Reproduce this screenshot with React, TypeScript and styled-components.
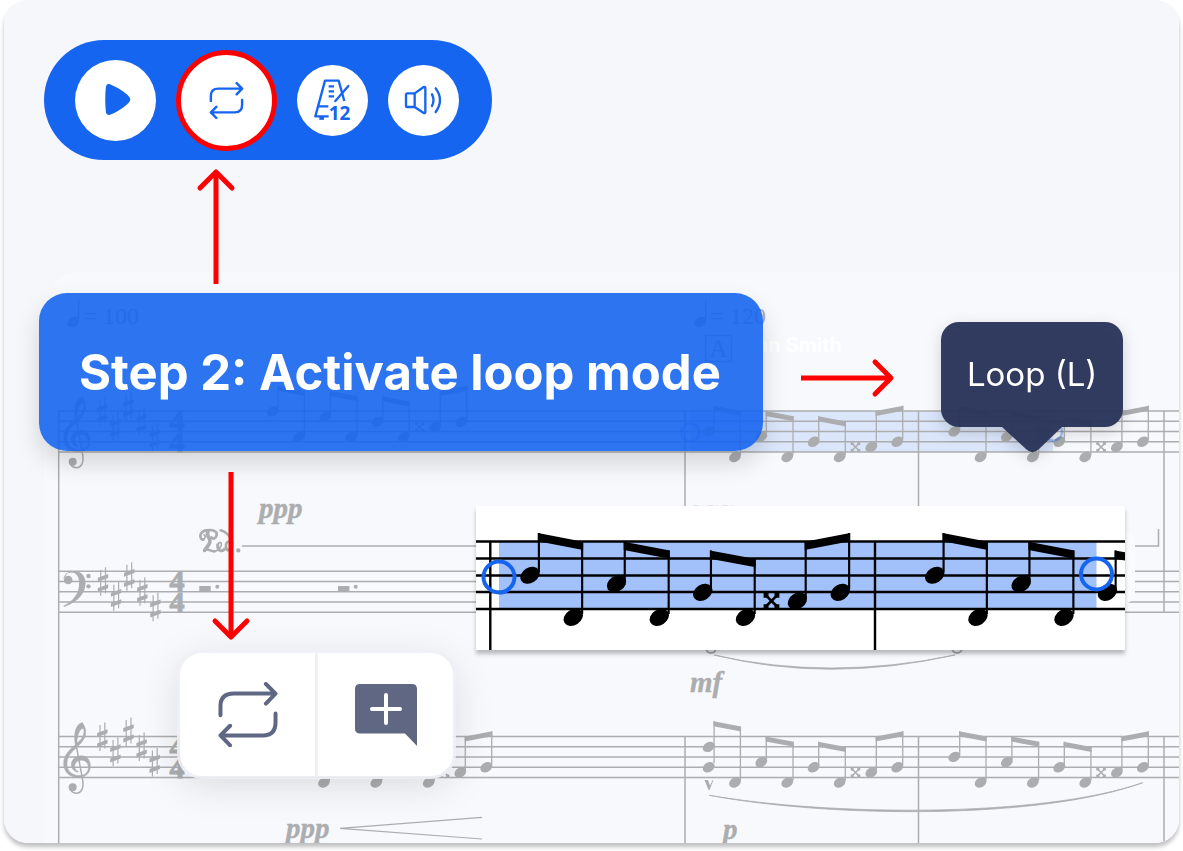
import React from "react";
import styled, { createGlobalStyle } from "styled-components";

const BLUE = "#1665f0";
const RED = "#ff0000";
const INK = "#acadaf";
const SLATE = "#606783";

const GlobalStyle = createGlobalStyle`
  *, *::before, *::after { box-sizing: border-box; }
  body { margin: 0; background: #fff; font-family: Inter, "Liberation Sans", sans-serif; }
`;

const Page = styled.main`
  padding: 0 4px 8px;
`;

const Card = styled.section`
  position: relative;
  isolation: isolate;
  overflow: hidden;
  padding: 40px 0 67px 35px;
  border-radius: 24px;
  background: #f5f7fb;
`;

const CardFrame = styled.div`
  border-radius: 24px;
  box-shadow: 0 4px 4px rgba(0, 0, 0, 0.25);
`;

const Paper = styled.div`
  position: absolute;
  z-index: -1;
  inset: 272px 0 0 40px;
  overflow: hidden;
  border-radius: 36px 0 0 0;
  background: #f8f9fd;
`;

const ScoreSvg = styled.svg`
  display: block;
  width: 100%;
  height: 100%;
`;

const Toolbar = styled.div`
  display: inline-flex;
  align-items: center;
  gap: 20px;
  height: 120px;
  margin-left: 5px;
  padding: 0 33px 0 31px;
  border-radius: 60px;
  background: ${BLUE};
`;

const RoundButton = styled.button<{ $size: number; $ring?: boolean }>`
  display: grid;
  place-items: center;
  width: ${(p) => p.$size}px;
  height: ${(p) => p.$size}px;
  padding: 0;
  border: ${(p) => (p.$ring ? `5px solid ${RED}` : "0")};
  border-radius: 50%;
  background: #fff;
  color: ${BLUE};
  cursor: pointer;
`;

const UpSlot = styled.div`
  height: 133px;
  padding: 8px 0 0 159px;
`;

const DownSlot = styled.div`
  height: 202px;
  padding: 21px 0 0 33px;
`;

const ArrowSvg = styled.svg`
  display: block;
  flex: none;
`;

const CalloutRow = styled.div`
  display: flex;
  align-items: flex-start;
`;

const Banner = styled.h1`
  flex: none;
  margin: 0;
  padding: 50px 42px 48px 40px;
  border-radius: 28px;
  background: rgba(22, 101, 240, 0.9);
  box-shadow: 0 12px 24px rgba(0, 0, 0, 0.15);
  color: #fff;
  font-size: 49px;
  font-weight: 700;
  line-height: 60px;
  white-space: nowrap;
`;

const RightSlot = styled.div`
  padding: 65px 46px 0 38px;
`;

const Tooltip = styled.div`
  position: relative;
  flex: none;
  margin-top: 29px;
  padding: 32px 26px 33px;
  border-radius: 18px;
  background: rgba(42, 52, 89, 0.96);
  color: #fff;
  font-size: 33px;
  line-height: 40px;
  white-space: nowrap;
  filter: drop-shadow(0 5px 8px rgba(0, 0, 0, 0.16));
`;

const TooltipTail = styled.svg`
  position: absolute;
  top: 100%;
  left: 50%;
  margin-left: -30px;
`;

const LowerRow = styled.div`
  display: flex;
  align-items: flex-start;
  padding: 0 54px 0 141px;
`;

const LeftColumn = styled.div`
  flex: none;
  margin-right: 23px;
`;

const Popover = styled.div`
  display: flex;
  width: 273px;
  height: 123px;
  border-radius: 22px;
  background: #fff;
  box-shadow: 0 0 0 3px rgba(238, 241, 247, 0.9), 0 8px 40px rgba(0, 0, 0, 0.13);
`;

const PopoverButton = styled.button`
  display: grid;
  flex: 1;
  place-items: center;
  padding: 0;
  border: 0;
  background: transparent;
  color: ${SLATE};
  cursor: pointer;

  & + & {
    border-left: 3px solid #eef0f6;
  }
`;

const Excerpt = styled.figure`
  flex: 0 1 649px;
  margin: 55px 0 0;
  background: #fff;
  box-shadow: 0 4px 4px rgba(0, 0, 0, 0.25);
`;

const ExcerptSvg = styled.svg`
  display: block;
  width: 100%;
  height: auto;
`;

const LoopIcon = ({ width, height }: { width: number; height: number }) => (
  <svg
    width={width}
    height={height}
    viewBox="650 545 186 196"
    fill="none"
    stroke="currentColor"
    strokeWidth={width < 40 ? 13 : 12}
    strokeLinecap="round"
    strokeLinejoin="round"
    aria-hidden="true"
  >
    <path d="M660 645V618Q660 580 700 580H824M797 551L826 580L797 610" />
    <path d="M826 640V666Q826 706 788 706H662M689 677L660 706L689 736" />
  </svg>
);

type Direction = "up" | "right" | "down";
const arrows: Record<Direction, { w: number; h: number; shaft: string; head: string }> = {
  up: { w: 36, h: 116, shaft: "M18 116V6", head: "M2 20L18 4L34 20" },
  down: { w: 36, h: 170, shaft: "M18 0V163", head: "M2 149L18 165L34 149" },
  right: { w: 94, h: 40, shaft: "M0 20H88", head: "M74 4L90 20L74 36" },
};

const Arrow = ({ direction }: { direction: Direction }) => {
  const { w, h, shaft, head } = arrows[direction];
  return (
    <ArrowSvg width={w} height={h} viewBox={`0 0 ${w} ${h}`} overflow="visible" fill="none" stroke={RED} strokeWidth="5" aria-hidden="true">
      <path d={shaft} />
      <path d={head} strokeLinecap="round" strokeLinejoin="round" />
    </ArrowSvg>
  );
};

/* Notes are placed from the first note head of a bar and the top staff line. */
const heads = [
  [0, 20.4],
  [26.3, 46],
  [52.6, 25.6],
  [78.6, 46],
  [105, 30.8],
  [131, 46],
  [162.6, 36],
  [188.6, 30.8],
];
const beams = [
  [5.4, -5.3, 31.7, 0],
  [57.6, 0, 84.3, 5.3],
  [110, 5.3, 136.6, 10.5],
  [167.6, 0, 194, -5.3],
];

const Head = ({ x, y }: { x: number; y: number }) => (
  <ellipse cx={x} cy={y} rx="6.3" ry="4.7" transform={`rotate(-32 ${x} ${y})`} />
);

interface BarProps {
  x: number;
  y: number;
  scale?: number;
  from?: number;
  to?: number;
  chord?: boolean;
}

const Bar = ({ x, y, scale = 1, from = 0, to = 8, chord = false }: BarProps) => (
  <g transform={`translate(${x} ${y}) scale(${scale})`}>
    {heads.slice(from, to).map(([hx, hy], n) => (
      <Head key={n} x={hx} y={chord && n === 0 ? 30.8 : hy} />
    ))}
    {chord && <Head x={0} y={10.4} />}
    {beams.slice(from / 2, Math.ceil(to / 2)).map(([x1, y1, x2, y2], n) => {
      const lift = chord && n === 0 ? -10 : 0;
      const i = (n + from / 2) * 2;
      return (
        <g key={n}>
          <path d={`M${x1 - 0.6} ${y1 + lift}L${x2 + 0.6} ${y2 + lift}V${y2 + lift + 5}L${x1 - 0.6} ${y1 + lift + 5}Z`} />
          <path
            d={`M${x1} ${y1 + lift}V${heads[i][1] - 2 + (chord && n === 0 ? 8 : 0)}M${x2} ${y2 + lift}V${heads[i + 1][1] - 2}`}
            stroke="currentColor"
            strokeWidth="1.3"
          />
        </g>
      );
    })}
    {to > 6 && (
      <g transform="translate(146.8 36)">
        <path d="M-4 -4L4 4M-4 4L4 -4" stroke="currentColor" strokeWidth="1.6" />
        <path d="M-4.8 -4.8H-1.8V-2.6L-2.4 -2H-4.8ZM4.8 -4.8H1.8V-2.6L2.4 -2H4.8ZM-4.8 4.8H-1.8V2.6L-2.4 2H-4.8ZM4.8 4.8H1.8V2.6L2.4 2H4.8Z" />
      </g>
    )}
  </g>
);

const Staff = ({ y, from = 58, to = 1600 }: { y: number; from?: number; to?: number }) => (
  <path
    d={[0, 10.2, 20.5, 30.7, 41].map((dy) => `M${from} ${y + dy}H${to}`).join("")}
    stroke="currentColor"
    strokeWidth="1.5"
  />
);

const Sharp = ({ x, y }: { x: number; y: number }) => (
  <g transform={`translate(${x} ${y})`}>
    <path d="M-2.3 -11.5V14.5M2.5 -14V12" stroke="currentColor" strokeWidth="1.2" />
    <path d="M-5.2 -3.6L5.2 -7.4V-3.4L-5.2 0.4ZM-5.2 6.8L5.2 3V7L-5.2 10.8Z" />
  </g>
);

const KeySignature = ({ x, y }: { x: number; y: number }) => (
  <>
    {[0, 15, -5, 10, 25.5].map((dy, n) => (
      <Sharp key={n} x={x + n * 13.1} y={y + dy} />
    ))}
  </>
);

const TimeSignature = ({ y }: { y: number }) => (
  <g
    fontFamily='"Liberation Serif", serif'
    fontSize="30"
    fontWeight="700"
    textAnchor="middle"
    stroke="currentColor"
    strokeWidth="1"
  >
    <text x="177" y={y + 20}>4</text>
    <text x="177" y={y + 41}>4</text>
  </g>
);

/* Clefs are drawn at three times their final size. */
const TrebleClef = ({ y }: { y: number }) => (
  <g transform={`translate(56 ${y - 16.3}) scale(0.3333)`} fill="none" stroke="currentColor" strokeLinecap="round">
    <path
      fill="currentColor"
      strokeWidth="1.5"
      d="M79 8C89 20 92 38 86 52C80 66 68 76 58 86C44 98 34 110 33 130C32 152 48 166 70 166C88 166 97 156 97 142C97 128 88 120 76 120C64 120 56 128 56 138C56 146 60 151 67 154L65 156C52 153 45 142 46 132C48 116 60 107 76 107C94 107 104 122 103 140C102 160 88 172 68 172C42 172 24 156 23 132C22 108 38 90 58 74C56 62 54 48 58 32C62 18 70 8 79 8ZM80 24C72 26 63 44 63 68C76 60 84 46 84 34C84 28 83 24 80 24Z"
    />
    <path strokeWidth="4.5" d="M59 66L80 180C84 204 76 219 61 219C54 219 48 216 44 210" />
    <circle cx="50" cy="201" r="12" fill="currentColor" stroke="none" />
  </g>
);

const BassClef = ({ x, y }: { x: number; y: number }) => (
  <g transform={`translate(${x} ${y}) scale(0.3333)`}>
    <path d="M0 24C2 -8 66 -12 66 36C66 74 34 96 1 108L0 105C28 90 47 70 47 36C47 8 30 0 15 6C10 8 7 12 6 16Z" />
    <circle cx="14" cy="27" r="13" />
    <circle cx="75" cy="15" r="6.5" />
    <circle cx="75" cy="46" r="6.5" />
  </g>
);

const PedalMark = () => (
  <g transform="translate(190 495) scale(0.3333)" fill="none" stroke="currentColor" strokeLinecap="round">
    <path strokeWidth="8" d="M40 134C28 134 26 110 48 106C70 102 82 110 80 120C78 130 70 134 64 127" />
    <path strokeWidth="5" d="M36 133C47 133 48 122 42 119" />
    <path strokeWidth="11" d="M54 110C46 122 62 128 60 140C58 152 50 156 44 166" />
    <path strokeWidth="8" d="M43 167C52 156 64 172 74 169" />
    <path strokeWidth="5" d="M74 169C84 168 96 156 94 146C92 138 82 144 83 154" />
    <path strokeWidth="9" d="M83 150C82 168 96 172 104 162" />
    <path strokeWidth="8" d="M122 141C112 136 106 146 108 156C110 170 122 168 126 156C130 138 118 114 92 106" />
    <circle cx="145" cy="166" r="3" strokeWidth="7" />
  </g>
);

const Tempo = ({ x, bpm }: { x: number; bpm: number }) => (
  <g transform={`translate(${x} 322)`}>
    <Head x={0} y={0} />
    <path d="M5.2 -2V-22" stroke="currentColor" strokeWidth="1.2" />
    <text x="10" y="2" fontFamily='"Liberation Serif", serif' fontSize="24">
      = {bpm}
    </text>
  </g>
);

const Dynamic = ({ x, y, children }: { x: number; y: number; children: string }) => (
  <text
    x={x}
    y={y}
    fontFamily='"Liberation Serif", serif'
    fontSize="29"
    fontWeight="700"
    fontStyle="italic"
    stroke="currentColor"
    strokeWidth="0.4"
  >
    {children}
  </text>
);

const Score = () => (
  <ScoreSvg viewBox="44 272 1135 571" preserveAspectRatio="xMinYMin slice" color={INK} fill="currentColor">
    <rect x="690" y="411" width="363" height="41" fill="#dbe6fb" />
    <Staff y={411} />
    <Staff y={571.3} />
    <Staff y={736.5} />
    <path
      d="M58.7 411V843M685 411V612M918.5 411V612M1164 411V612M685 736.5V843M918.5 736.5V843M1164 736.5V843"
      stroke="currentColor"
      strokeWidth="1.5"
    />

    <Tempo x={73.4} bpm={100} />
    <Tempo x={700.4} bpm={120} />
    <rect x="705.5" y="335.5" width="26" height="26" fill="none" stroke="currentColor" strokeWidth="1.5" />
    <text x="718.5" y="357" textAnchor="middle" fontFamily='"Liberation Serif", serif' fontSize="26">A</text>
    <text x="842" y="352" textAnchor="end" fontFamily="Inter, sans-serif" fontSize="20" fontWeight="700" fill="#fff">
      John Smith
    </text>

    <TrebleClef y={411} />
    <KeySignature x={102.3} y={411.3} />
    <TimeSignature y={411} />
    <Bar x={272.7} y={391} />
    <Bar x={708.7} y={411} />
    <Bar x={954.3} y={411} />
    <circle cx="690.5" cy="432.5" r="9" fill="none" stroke={BLUE} strokeOpacity="0.35" strokeWidth="2.5" />
    <circle cx="1053" cy="431.7" r="9" fill="none" stroke={BLUE} strokeOpacity="0.35" strokeWidth="2.5" />
    <Dynamic x={259} y={518}>ppp</Dynamic>
    <Dynamic x={692} y={520}>ppp</Dynamic>

    <PedalMark />
    <path d="M242 546H1158.5V529" fill="none" stroke="currentColor" strokeWidth="1.5" />
    <BassClef x={63.5} y={571} />
    <KeySignature x={103} y={581.3} />
    <TimeSignature y={571.3} />
    <path d="M199.3 586H210.7V591.7H199.3ZM338 586H349.4V591.7H338Z" />
    <circle cx="217.3" cy="586.7" r="2" />
    <circle cx="355.7" cy="586.7" r="2" />
    <rect x="1090" y="531" width="45" height="73" rx="12" fill="#fafbfe" />

    <circle cx="711" cy="648" r="5" fill="none" stroke="currentColor" strokeWidth="2" />
    <circle cx="957" cy="648" r="5" fill="none" stroke="currentColor" strokeWidth="2" />
    <path d="M714 655Q829 681 955 655Q829 683.5 714 655Z" stroke="currentColor" strokeWidth="0.8" />
    <Dynamic x={690} y={692}>mf</Dynamic>

    <TrebleClef y={736.5} />
    <KeySignature x={102.3} y={736.6} />
    <TimeSignature y={736.5} />
    <Bar x={297.7} y={736.5} />
    <Bar x={708.7} y={736.5} chord />
    <Bar x={954.3} y={736.5} />
    <path d="M704.5 780H708L710 785.5L712.7 780H713.5L709.5 790H708.5Z" />
    <path
      d="M709.3 795.3C830 816 1040 818 1142.7 782.7C1040 820 830 818 709.3 795.3Z"
      stroke="currentColor"
      strokeWidth="0.8"
    />
    <path d="M482 817.3L340 828.3L482 839" fill="none" stroke="currentColor" strokeWidth="1.2" />
    <Dynamic x={286} y={838}>ppp</Dynamic>
    <Dynamic x={723} y={839}>p</Dynamic>
  </ScoreSvg>
);

const LoopedExcerpt = () => (
  <Excerpt aria-label="Looped passage">
    <ExcerptSvg viewBox="476 506 649 144" color="#000" fill="currentColor">
      <rect x="499" y="541.5" width="597.5" height="67" fill="#a2c0f9" />
      <path
        d="M476 541.5H1125M476 558.5H1125M476 575.5H1125M476 592H1125M476 609H1125M490.3 541V650M875 541V650"
        stroke="currentColor"
        strokeWidth="2.4"
      />
      <Bar x={530} y={541.7} scale={1.645} />
      <Bar x={934.7} y={541.7} scale={1.645} to={6} />
      <circle cx="499" cy="577" r="15.5" fill="none" stroke={BLUE} strokeWidth="4" />
      <circle cx="1096.5" cy="574" r="15.5" fill="none" stroke={BLUE} strokeWidth="4" />
    </ExcerptSvg>
  </Excerpt>
);

export default function App() {
  return (
    <Page>
      <GlobalStyle />
      <CardFrame>
        <Card>
          <Paper>
            <Score />
          </Paper>

          <Toolbar role="toolbar" aria-label="Playback">
            <RoundButton $size={81} aria-label="Play">
              <svg width="81" height="81" viewBox="0 0 81 81" aria-hidden="true">
                <path
                  fill="currentColor"
                  d="M35 24.2C42 27 49 31.5 53.5 36Q57 39.5 53.5 43C49 47.5 42 52 35 54.8C32.5 55.5 31.2 54 30.9 52C30 43.5 30 35.5 30.9 27C31.2 25 32.5 23.5 35 24.2Z"
                />
              </svg>
            </RoundButton>
            <RoundButton $size={101} $ring aria-label="Loop">
              <LoopIcon width={35} height={37} />
            </RoundButton>
            <RoundButton $size={71} aria-label="Metronome">
              <svg width="71" height="71" viewBox="3 8 213 213" fill="none" stroke="currentColor" strokeWidth="7" aria-hidden="true">
                <path d="M145 116L128 55H87L58 162H98" strokeLinejoin="round" />
                <path d="M68 132H97M98 72H114M98 87H114M98 102H114" />
                <path d="M157 71L118 116" strokeLinecap="round" />
                <path d="M70 168H84" strokeWidth="9" />
                <text
                  x="98"
                  y="174"
                  fill="currentColor"
                  stroke="none"
                  fontFamily='"Open Sans", "Noto Sans", sans-serif'
                  fontSize="57"
                  fontWeight="700"
                >
                  12
                </text>
              </svg>
            </RoundButton>
            <RoundButton $size={71} aria-label="Volume">
              <svg
                width="71"
                height="71"
                viewBox="276 8 213 213"
                fill="none"
                stroke="currentColor"
                strokeWidth="7"
                strokeLinecap="round"
                strokeLinejoin="round"
                aria-hidden="true"
              >
                <path d="M356 93H334Q330 93 330 97V130Q330 134 334 134H356ZM356 93L383 74Q388 72 388 77V149Q388 154 383 152L356 134" />
                <path d="M408 96Q417 113 408 131M419 78Q445 113 419 149" />
              </svg>
            </RoundButton>
          </Toolbar>

          <UpSlot>
            <Arrow direction="up" />
          </UpSlot>

          <CalloutRow>
            <Banner>Step 2: Activate loop mode</Banner>
            <RightSlot>
              <Arrow direction="right" />
            </RightSlot>
            <Tooltip role="tooltip">
              Loop (L)
              <TooltipTail width="60" height="26" viewBox="0 0 60 26" aria-hidden="true">
                <path d="M0 0H60L37 22Q30.5 28.5 24 22Z" fill="rgba(42, 52, 89, 0.96)" />
              </TooltipTail>
            </Tooltip>
          </CalloutRow>

          <LowerRow>
            <LeftColumn>
              <DownSlot>
                <Arrow direction="down" />
              </DownSlot>
              <Popover>
                <PopoverButton aria-label="Loop selection">
                  <LoopIcon width={62} height={65} />
                </PopoverButton>
                <PopoverButton aria-label="Add comment">
                  <svg width="62" height="62" viewBox="0 0 62 62" aria-hidden="true">
                    <path fill="currentColor" d="M5 0H57Q62 0 62 5V62L50 49.5H5Q0 49.5 0 44.5V5Q0 0 5 0Z" />
                    <path d="M31 11V39M17 25H45" stroke="#fff" strokeWidth="4" strokeLinecap="round" />
                  </svg>
                </PopoverButton>
              </Popover>
            </LeftColumn>
            <LoopedExcerpt />
          </LowerRow>
        </Card>
      </CardFrame>
    </Page>
  );
}
